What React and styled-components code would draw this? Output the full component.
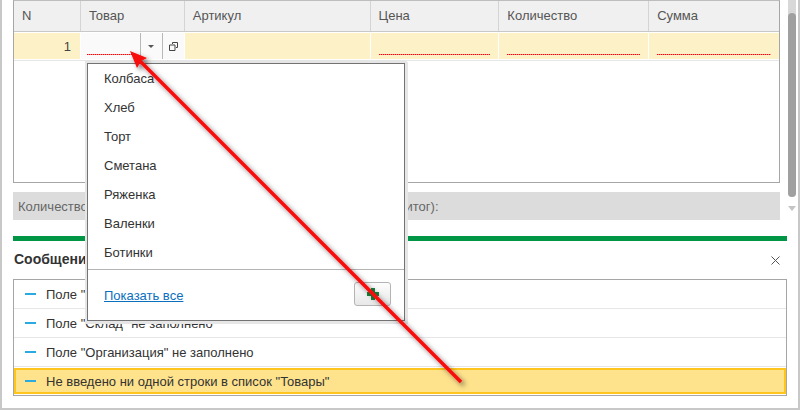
import styled, { createGlobalStyle } from 'styled-components';

const columns = [
  { title: 'N', width: 67 },
  { title: 'Товар', width: 104 },
  { title: 'Артикул', width: 186 },
  { title: 'Цена', width: 129 },
  { title: 'Количество', width: 150 },
  { title: 'Сумма', width: 130 },
];

const products = ['Колбаса', 'Хлеб', 'Торт', 'Сметана', 'Ряженка', 'Валенки', 'Ботинки'];

const messages = [
  'Поле "Контрагент" не заполнено',
  'Поле "Склад" не заполнено',
  'Поле "Организация" не заполнено',
  'Не введено ни одной строки в список "Товары"',
];

export default function App() {
  return (
    <Page>
      <GlobalStyle />
      <Main>
        <Content>
          <Table>
            <HeaderRow>
              {columns.map((col) => (
                <HeaderCell key={col.title} $width={col.width}>{col.title}</HeaderCell>
              ))}
            </HeaderRow>
            <DataRow>
              <NumberCell $width={67}>1</NumberCell>
              <ProductCell $width={104}>
                <ProductInput />
                <ChoiceButton>
                  <svg width="6" height="3" viewBox="0 0 6 3"><path d="M0 0h6L3 3z" fill="#555" /></svg>
                </ChoiceButton>
                <OpenButton>
                  <svg width="9" height="9" viewBox="0 0 9 9" fill="none" stroke="#444">
                    <path d="M3.5 2V.5h5v5H7" />
                    <path d="M.5 3h5.500v5.500h-5.500z" />
                  </svg>
                </OpenButton>
              </ProductCell>
              <DataCell $width={186} />
              <DataCell $width={129}><Required /></DataCell>
              <DataCell $width={150}><Required /></DataCell>
              <DataCell $width={130}><Required /></DataCell>
            </DataRow>
          </Table>
          <Totals>
            <span>Количество (итог):</span>
            <span>Сумма (итог):</span>
          </Totals>
        </Content>
        <Scrollbar>
          <ScrollTrack><ScrollThumb /></ScrollTrack>
          <svg width="8" height="5" viewBox="0 0 8 5"><path d="M0 0h8L4 5z" fill="#c4c4c4" /></svg>
        </Scrollbar>
      </Main>

      <GreenLine />

      <MessagesHead>
        <MessagesTitle>Сообщения:</MessagesTitle>
        <svg width="9" height="9" viewBox="0 0 9 9" stroke="#555" fill="none"><path d="M.5.5l8 8M8.5.5l-8 8" /></svg>
      </MessagesHead>

      <MessageList>
        {messages.map((text, i) => (
          <Message key={text} $active={i === messages.length - 1}>
            <Dash />
            {text}
          </Message>
        ))}
      </MessageList>

      <Popup>
        <PopupList>
          {products.map((name) => <PopupItem key={name}>{name}</PopupItem>)}
        </PopupList>
        <PopupFooter>
          <ShowAll href="#">Показать все</ShowAll>
          <AddButton>
            <svg width="12" height="12" viewBox="0 0 12 12"><path d="M4 0h4v4h4v4H8v4H4V8H0V4h4z" fill="#17853d" /></svg>
          </AddButton>
        </PopupFooter>
      </Popup>

      <ArrowLayer width="800" height="410" viewBox="0 0 800 410">
        <defs>
          <filter id="arrowShadow" x="-10%" y="-10%" width="120%" height="120%">
            <feDropShadow dx="3" dy="3" stdDeviation="2.5" floodColor="#000" floodOpacity="0.5" />
          </filter>
        </defs>
        <g filter="url(#arrowShadow)">
          <path d="M461 382L139 60" stroke="#f80808" strokeWidth="3.6" fill="none" />
          <path d="M130 51L147 58L141 61L137 68z" fill="#f80808" />
        </g>
      </ArrowLayer>
    </Page>
  );
}

const GlobalStyle = createGlobalStyle`
  html, body {
    margin: 0;
    padding: 0;
    background: #fff;
  }
`;

const Page = styled.div`
  position: relative;
  width: 800px;
  height: 410px;
  box-sizing: border-box;
  overflow: hidden;
  padding-left: 11px;
  border-left: 2px solid #c8c8c8;
  border-right: 2px solid #c8c8c8;
  border-bottom: 2px solid #c8c8c8;
  font-family: "Liberation Sans", Arial, sans-serif;
  font-size: 13px;
  color: #333;
`;

const Main = styled.div`
  display: flex;
  gap: 8px;
`;

const Content = styled.div`
  width: 767px;
`;

const Table = styled.div`
  height: 183px;
  box-sizing: border-box;
  border: 1px solid #a6a6a6;
  border-top-color: #bdbdbd;
`;

const HeaderRow = styled.div`
  display: flex;
  height: 31px;
  background: #f0f0f0;
  border-bottom: 1px solid #c8c8c8;
  box-sizing: border-box;
`;

const HeaderCell = styled.div`
  width: ${(p) => p.$width}px;
  box-sizing: border-box;
  padding: 7px 0 0 8px;
  color: #555;
  border-right: 1px solid #d4d4d4;

  &:last-child {
    border-right: 0;
  }
`;

const DataRow = styled.div`
  display: flex;
  height: 28px;
  margin-top: 1px;
  padding-bottom: 1px;
  border-bottom: 1px solid #e6e6e6;
  box-sizing: border-box;
`;

const DataCell = styled.div`
  width: ${(p) => p.$width}px;
  box-sizing: border-box;
  padding: 21px 8px 0;
  background: #fdf1c7;
  border-right: 1px solid #fff;

  &:last-child {
    border-right: 0;
  }
`;

const NumberCell = styled(DataCell)`
  padding: 6px 9px 0 0;
  text-align: right;
  color: #444;
`;

const ProductCell = styled.div`
  width: ${(p) => p.$width}px;
  display: flex;
  box-sizing: border-box;
  background: #fafafa;
  border-right: 1px solid #fff;
`;

const Required = styled.div`
  height: 1px;
  background: repeating-linear-gradient(90deg, #f00 0 1px, #ff8a8a 1px 2px);
`;

const ProductInput = styled(Required)`
  flex: 1;
  margin: 21px 6px 0 6px;
`;

const ChoiceButton = styled.div`
  width: 21px;
  display: flex;
  align-items: center;
  justify-content: center;
  border-left: 1px solid #b8b8b8;
`;

const OpenButton = styled(ChoiceButton)`
  width: 21px;
`;

const Totals = styled.div`
  display: flex;
  gap: 40px;
  width: 767px;
  height: 28px;
  margin-top: 9px;
  padding-left: 5px;
  box-sizing: border-box;
  align-items: center;
  background: #dcdcdc;
  color: #666;

  span:last-child {
    margin-left: 188px;
  }
`;

const Scrollbar = styled.div`
  width: 8px;
  display: flex;
  flex-direction: column;
  align-items: center;
  gap: 9px;
`;

const ScrollTrack = styled.div`
  width: 8px;
  height: 197px;
  padding-top: 13px;
  box-sizing: border-box;
  background: #d8d8d8;
  border-radius: 0 0 4px 4px;
`;

const ScrollThumb = styled.div`
  height: 184px;
  background: #a0a0a0;
  border-radius: 4px;
`;

const GreenLine = styled.div`
  width: 774px;
  height: 5px;
  margin-top: 16px;
  background: #009646;
`;

const MessagesHead = styled.div`
  width: 767px;
  height: 38px;
  display: flex;
  align-items: center;
  justify-content: space-between;
  padding-left: 1px;
  box-sizing: border-box;
`;

const MessagesTitle = styled.div`
  margin-bottom: 2px;
  font-weight: bold;
  font-size: 14px;
  color: #333;
`;

const MessageList = styled.div`
  width: 774px;
  box-sizing: border-box;
  border: 1px solid #a6a6a6;
`;

const Message = styled.div`
  display: flex;
  align-items: center;
  height: ${(p) => (p.$active ? 26 : 29)}px;
  margin: ${(p) => (p.$active ? '1px 0' : '0')};
  box-sizing: border-box;
  padding-left: ${(p) => (p.$active ? 9 : 11)}px;
  background: ${(p) => (p.$active ? '#fee28c' : '#fff')};
  border: ${(p) => (p.$active ? '2px solid #fdc51d' : '0')};
  border-bottom: ${(p) => (p.$active ? '2px solid #fdc51d' : '1px solid #e6e6e6')};
  color: #333;
`;

const Dash = styled.span`
  width: 11px;
  height: 2px;
  margin-right: 10px;
  background: #29abe2;
`;

const Popup = styled.div`
  position: absolute;
  left: 85px;
  top: 63px;
  width: 318px;
  height: 258px;
  box-sizing: border-box;
  background: #fff;
  border: 1px solid #737373;
  box-shadow: 0 0 0 2px #e6e6e6, 1px 1px 0 2px #e6e6e6;
`;

const PopupList = styled.div`
  padding: 0 16px;
  height: 206px;
  box-sizing: border-box;
  border-bottom: 1px solid #b4b4b4;
`;

const PopupItem = styled.div`
  height: 29px;
  line-height: 29px;
  color: #333;
`;

const PopupFooter = styled.div`
  display: flex;
  align-items: center;
  justify-content: space-between;
  padding: 12px 13px 0 16px;
`;

const ShowAll = styled.a`
  margin-top: 3px;
  color: #0b6fc0;
  text-decoration: underline;
`;

const AddButton = styled.div`
  width: 37px;
  height: 24px;
  display: flex;
  align-items: center;
  justify-content: center;
  box-sizing: border-box;
  border: 1px solid #b4b4b4;
  border-radius: 3px;
  background: linear-gradient(#fdfdfd, #e8e8e8);
`;

const ArrowLayer = styled.svg`
  position: absolute;
  left: -2px;
  top: 0;
  pointer-events: none;
`;
